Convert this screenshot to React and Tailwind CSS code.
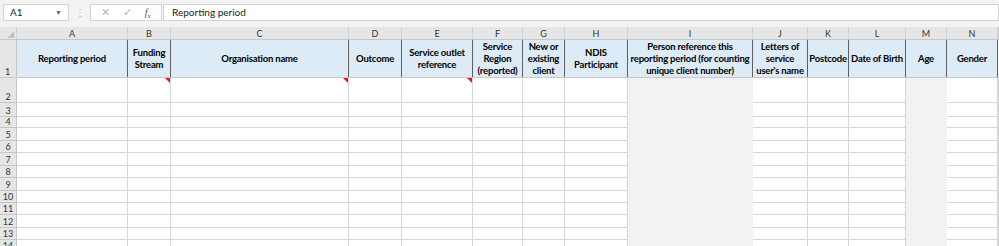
import React from "react";

// column widths: row header, A..N, then the sliver of O
const widths = [17, 111, 43, 178, 53, 71, 50, 42, 63, 125, 55, 41, 57, 41, 51, 1];
const letters = ["", "A", "B", "C", "D", "E", "F", "G", "H", "I", "J", "K", "L", "M", "N", ""];

const headers = [
  "Reporting period",
  "Funding\nStream",
  "Organisation name",
  "Outcome",
  "Service outlet\nreference",
  "Service\nRegion\n(reported)",
  "New or\nexisting\nclient",
  "NDIS\nParticipant",
  "Person reference this\nreporting period (for counting\nunique client number)",
  "Letters of\nservice\nuser's name",
  "Postcode",
  "Date of Birth",
  "Age",
  "Gender",
];

// rows 2..14 heights (row 14 cut off by window)
const rowHeights = [25, 14, 11, 13, 12, 13, 12, 13, 12, 12, 13, 12, 12];
const greyCols = [9, 13];
const commentCols = [2, 3, 5];

function Toolbar() {
  return (
    <div className="h-[27px] bg-[#f3f3f3] flex items-start pt-[4px] pl-[3px]">
      <div className="w-[66px] h-[17px] bg-white border border-[#d4d4d4] flex items-center justify-between pl-[6px] pr-[6px]">
        <span className="text-[10px] text-[#222]">A1</span>
        <span className="text-[7px] text-[#666]">▼</span>
      </div>
      <div className="w-[21px] h-[17px] flex items-center justify-center text-[10px] text-[#b0b0b0]">⋮</div>
      <div className="w-[72px] h-[17px] bg-white border border-[#d4d4d4] flex items-center justify-around px-[4px] text-[11px] text-[#b5b5b5]">
        <span>✕</span>
        <span>✓</span>
        <span className="font-['Liberation_Serif'] italic text-[#555] text-[10px]">f<sub className="text-[7px]">x</sub></span>
      </div>
      <div className="flex-1 h-[17px] ml-[1px] bg-white border border-[#d4d4d4] flex items-center pl-[8px] text-[10px] text-[#222]">
        Reporting period
      </div>
    </div>
  );
}

function ColumnHeader() {
  return (
    <div className="flex h-[13px] bg-[#e6e6e6] border-b border-[#c6c6c6]">
      {widths.map((w, i) => (
        <div
          key={i}
          style={{ width: w }}
          className="shrink-0 h-full border-r border-[#d0d0d0] flex items-center justify-center text-[9px] text-[#333] leading-none"
        >
          {i === 0 ? (
            <svg width="17" height="13" viewBox="0 0 17 13">
              <path d="M15 4 L15 11 L8 11 Z" fill="#bdbdbd" />
            </svg>
          ) : (
            letters[i]
          )}
        </div>
      ))}
    </div>
  );
}

function HeaderRow() {
  return (
    <div className="flex h-[38px] border-b border-[#c8c8c8]">
      {widths.map((w, i) => {
        if (i === 0)
          return (
            <div
              key={i}
              style={{ width: w }}
              className="shrink-0 bg-[#e6e6e6] border-r border-[#c6c6c6] flex items-end pl-[5px] pb-[1px] text-[9px] text-[#333] leading-none"
            >
              1
            </div>
          );
        if (i === widths.length - 1)
          return <div key={i} style={{ width: w }} className="shrink-0 bg-white" />;
        return (
          <div
            key={i}
            style={{ width: w }}
            className="shrink-0 bg-[#ddebf7] border-r border-[#5f5f5f] flex items-center justify-center text-center whitespace-pre-line font-bold text-[9.5px] leading-[12px] text-black tracking-[-0.2px]"
          >
            {headers[i - 1]}
          </div>
        );
      })}
    </div>
  );
}

function DataRow({ n, h }) {
  return (
    <div className="flex" style={{ height: h }}>
      {widths.map((w, i) => {
        if (i === 0)
          return (
            <div
              key={i}
              style={{ width: w }}
              className="shrink-0 bg-[#e6e6e6] border-r border-b border-[#c6c6c6] flex items-end justify-center pb-[1px] text-[9px] text-[#333] leading-none"
            >
              {n}
            </div>
          );
        if (greyCols.includes(i))
          return <div key={i} style={{ width: w }} className="shrink-0 bg-[#f2f2f2]" />;
        if (i === widths.length - 1)
          return <div key={i} style={{ width: w }} className="shrink-0 bg-[#d4d4d4]" />;
        return (
          <div
            key={i}
            style={{ width: w }}
            className="shrink-0 relative bg-white border-r border-b border-[#d6d6d6]"
          >
            {n === 2 && commentCols.includes(i) && (
              <svg className="absolute top-0 right-0" width="5" height="5" viewBox="0 0 5 5">
                <path d="M0 0 L5 0 L5 5 Z" fill="#e8141a" />
              </svg>
            )}
          </div>
        );
      })}
    </div>
  );
}

export default function App() {
  return (
    <div className="w-[999px] h-[246px] overflow-hidden bg-white font-['Lato','Liberation_Sans',sans-serif]">
      <Toolbar />
      <ColumnHeader />
      <HeaderRow />
      {rowHeights.map((h, idx) => (
        <DataRow key={idx} n={idx + 2} h={h} />
      ))}
    </div>
  );
}
